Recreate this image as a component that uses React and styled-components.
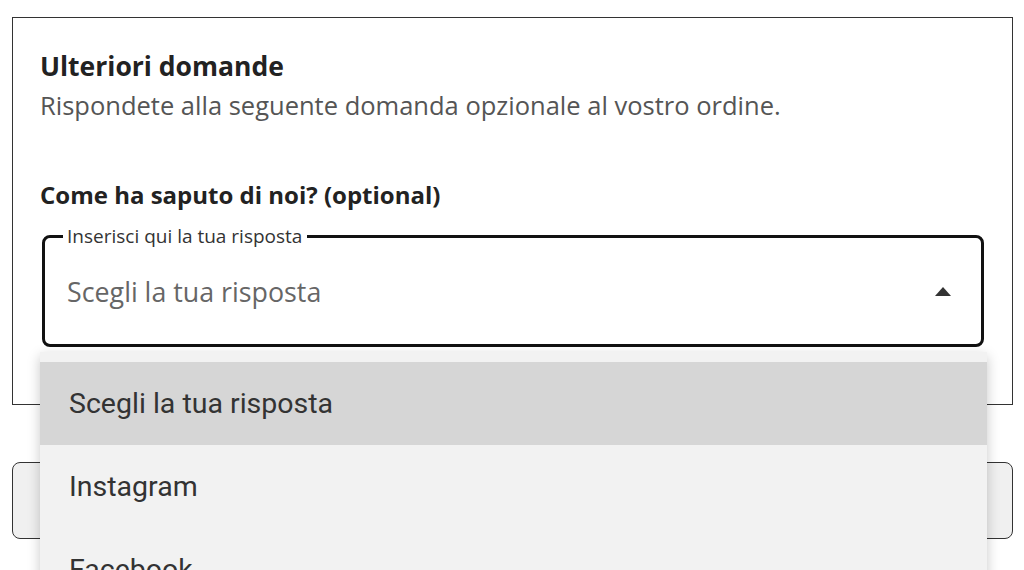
import styled, { createGlobalStyle } from "styled-components"

const GlobalStyle = createGlobalStyle`
    body {
        margin: 0;
        background: #ffffff;
        font-family: "Open Sans", "Noto Sans", sans-serif;
        color: #222;
    }
`

const options = ['Scegli la tua risposta', 'Instagram', 'Facebook', 'Google', 'Passaparola']

export default function App() {
    return (
        <Page>
            <GlobalStyle />
            <Card>
                <Title>Ulteriori domande</Title>
                <Description>Rispondete alla seguente domanda opzionale al vostro ordine.</Description>
                <Label>Come ha saputo di noi? (optional)</Label>
                <SelectWrap>
                    <Field>
                        <Legend>Inserisci qui la tua risposta</Legend>
                        <Placeholder>Scegli la tua risposta</Placeholder>
                        <svg width="16" height="9" viewBox="0 0 16 9">
                            <path d="M0 9 L8 0 L16 9 Z" fill="#333" />
                        </svg>
                    </Field>
                    <Menu>
                        {options.map((o, i) =>
                            <MenuItem key={i} active={i === 0}>{o}</MenuItem>
                        )}
                    </Menu>
                </SelectWrap>
            </Card>
            <Button />
        </Page>
    )
}

const Page = styled.div`
    width: 1024px;
    height: 570px;
    overflow: hidden;
    box-sizing: border-box;
    padding: 17px 11px 0 12px;

    display: flex;
    flex-direction: column;
    gap: 57px;
`

const Card = styled.div`
    border: 1.5px solid #333;
    padding: 31px 27px 57px;

    display: flex;
    flex-direction: column;
`

const Title = styled.h2`
    margin: 0;
    font-size: 26.5px;
    font-weight: 700;
    line-height: 34px;
    color: #222;
`

const Description = styled.p`
    margin: 5px 0 0;
    font-size: 25.5px;
    line-height: 34px;
    color: #555;
`

const Label = styled.p`
    margin: 57px 0 12px;
    font-size: 24px;
    font-weight: 700;
    line-height: 32px;
    color: #222;
`

const SelectWrap = styled.div`
    position: relative;
    margin: 0 1px 0 2px;
`

const Field = styled.fieldset`
    margin: 0;
    height: 124px;
    box-sizing: border-box;
    border: 3px solid #111;
    border-radius: 8px;
    padding: 0 30px 10px 22px;

    display: flex;
    align-items: center;
    justify-content: space-between;
`

const Legend = styled.legend`
    padding: 0 5px 0 4px;
    margin-left: -4px;
    font-size: 19px;
    line-height: 26px;
    color: #333;
`

const Placeholder = styled.span`
    font-size: 26.8px;
    color: #666;
`

const Menu = styled.div`
    position: absolute;
    top: calc(100% + 5px);
    left: -2px;
    right: -3px;
    padding-top: 10px;
    background: #f2f2f2;
    box-shadow: 0 4px 12px rgba(0, 0, 0, 0.22);
`

const MenuItem = styled.div`
    height: 83px;
    padding-left: 29px;
    display: flex;
    align-items: center;

    font-family: Roboto, "Noto Sans", sans-serif;
    font-size: 28.5px;
    color: #333;
    background: ${props => props.active ? '#d6d6d6' : 'transparent'};
`

const Button = styled.div`
    height: 75px;
    border: 1.5px solid #333;
    border-radius: 8px;
    background: #f0f0f0;
`
